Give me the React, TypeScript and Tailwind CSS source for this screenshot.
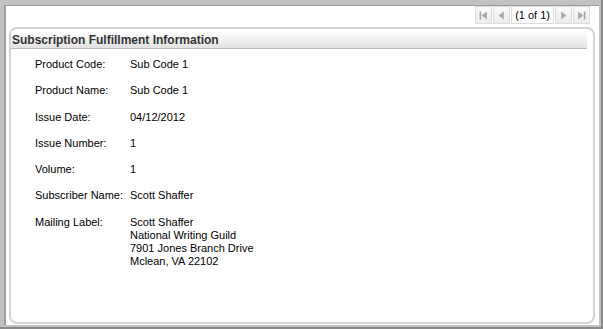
import React from "react";

const rows = [
  { label: "Product Code:", value: ["Sub Code 1"] },
  { label: "Product Name:", value: ["Sub Code 1"] },
  { label: "Issue Date:", value: ["04/12/2012"] },
  { label: "Issue Number:", value: ["1"] },
  { label: "Volume:", value: ["1"] },
  { label: "Subscriber Name:", value: ["Scott Shaffer"] },
  {
    label: "Mailing Label:",
    value: ["Scott Shaffer", "National Writing Guild", "7901 Jones Branch Drive", "Mclean, VA 22102"],
  },
];

const PagerIcon = ({ kind }: { kind: "first" | "prev" | "next" | "last" }) => (
  <svg width="9" height="9" viewBox="0 0 8 8" fill="#a6a6a6">
    {kind === "first" && (
      <>
        <rect x="0.5" y="0.5" width="1.5" height="7" />
        <polygon points="7,0.5 2.5,4 7,7.5" />
      </>
    )}
    {kind === "prev" && <polygon points="6,0.5 1.5,4 6,7.5" />}
    {kind === "next" && <polygon points="2,0.5 6.5,4 2,7.5" />}
    {kind === "last" && (
      <>
        <rect x="6" y="0.5" width="1.5" height="7" />
        <polygon points="1,0.5 5.5,4 1,7.5" />
      </>
    )}
  </svg>
);

const PagerButton = ({ kind }: { kind: "first" | "prev" | "next" | "last" }) => (
  <div className="w-[17px] h-[18px] flex items-center justify-center bg-gradient-to-b from-[#fafafa] to-[#ececec] border border-[#dcdcdc]">
    <PagerIcon kind={kind} />
  </div>
);

export default function App() {
  return (
    <div className="w-[603px] h-[329px] bg-[#c2c2c2] border-r-2 border-b-2 border-[#888888] pt-[5px] pl-[4px] pr-[2px] pb-[2px] font-['Liberation_Sans',Arial,sans-serif]">
      <div className="h-full bg-white border-l-2 border-t border-[#9c9c9c] flex flex-col pb-[1px]">
        {/* pager */}
        <div className="flex justify-end pr-[9px] gap-[1px] items-center h-[18px]">
          <PagerButton kind="first" />
          <PagerButton kind="prev" />
          <div className="h-[18px] px-[3px] flex items-center border border-[#dcdcdc] text-[11px] text-black">
            (1 of 1)
          </div>
          <PagerButton kind="next" />
          <PagerButton kind="last" />
        </div>

        {/* panel */}
        <div className="flex-1 mt-[3px] ml-[3px] mr-[4px] border-2 border-[#d4d4d4] rounded-[8px] pt-[2px] pr-[6px]">
          <div className="h-[18px] flex items-center pl-[1px] bg-gradient-to-b from-white to-[#e2e2e2] border-b border-[#b8b8b8] text-[12px] font-bold text-[#333333]">
            Subscription Fulfillment Information
          </div>
          <div className="pl-[24px] pt-[9px] grid grid-cols-[95px_1fr] gap-y-[13.3px] text-[11px] leading-[13px] text-black">
            {rows.map((r) => (
              <React.Fragment key={r.label}>
                <div>{r.label}</div>
                <div>
                  {r.value.map((v) => (
                    <div key={v}>{v}</div>
                  ))}
                </div>
              </React.Fragment>
            ))}
          </div>
        </div>
      </div>
    </div>
  );
}
